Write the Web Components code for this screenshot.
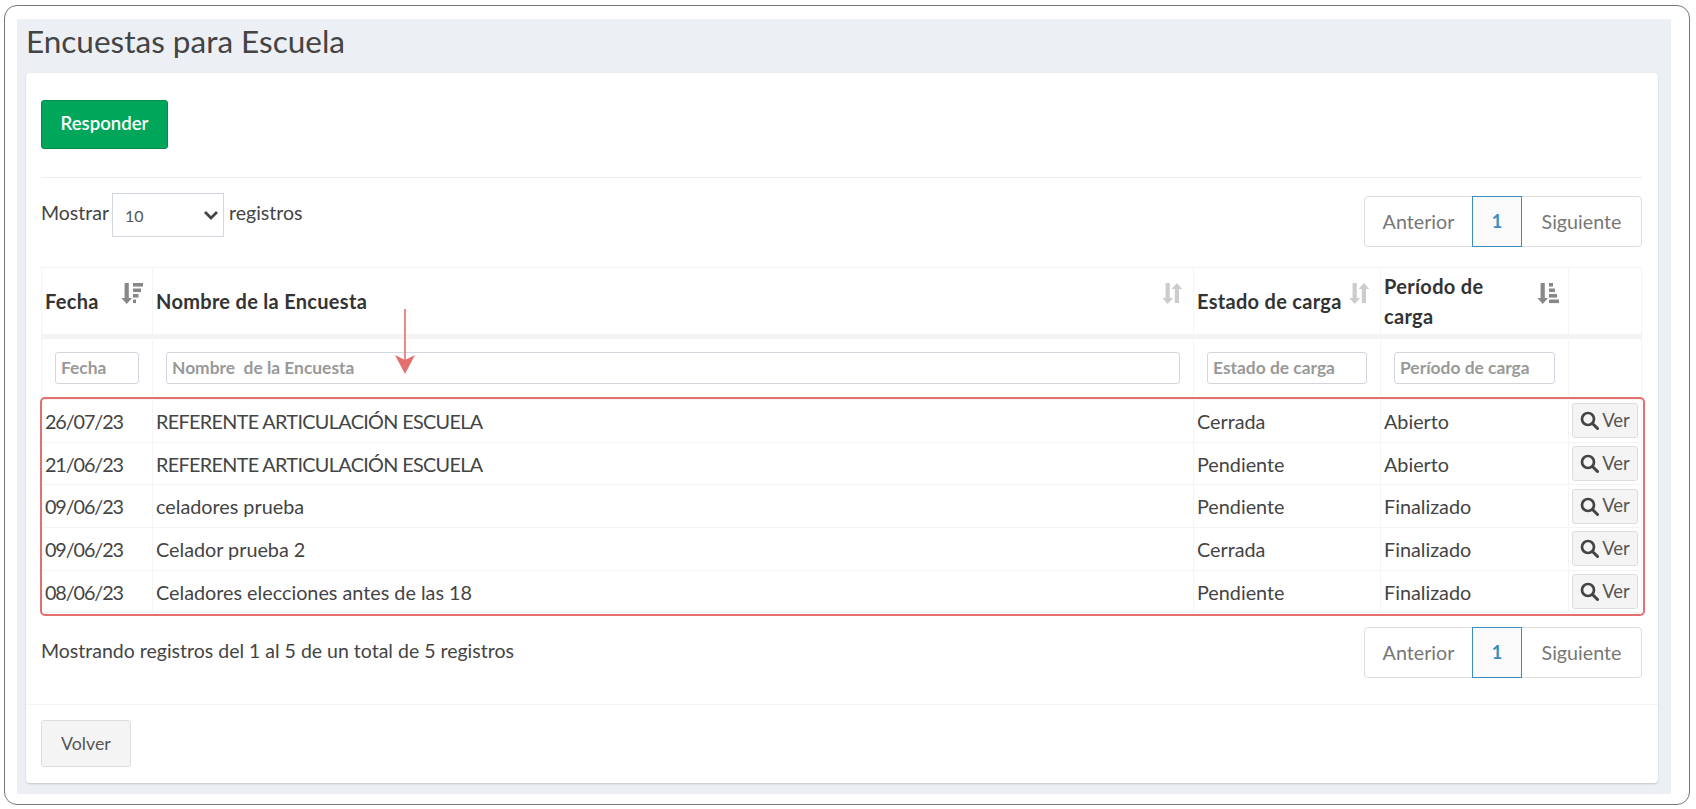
<!DOCTYPE html>
<html lang="es">
<head>
<meta charset="utf-8">
<title>Encuestas para Escuela</title>
<style>
    html, body { margin: 0; background: #fff; }
    body { font: 19.5px/1.5 Lato, "Noto Sans", sans-serif; color: #444; }
</style>
</head>
<body>
<survey-frame heading="Encuestas para Escuela">
    <survey-card>
        <app-button variant="success">Responder</app-button>
        <hr-line></hr-line>
        <length-row></length-row>
        <survey-table></survey-table>
        <info-row>Mostrando registros del 1 al 5 de un total de 5 registros</info-row>
        <app-button slot="footer">Volver</app-button>
    </survey-card>
</survey-frame>

<script>
'use strict';

(function() {
    const RED = '#e46f6f';

    class SurveyFrame extends HTMLElement {
        constructor() {
            super();
            const shadow = this.attachShadow({ mode: 'open' });
            shadow.innerHTML = `
                <style>
                    :host {
                        display: block;
                        box-sizing: border-box;
                        width: 1686px;
                        height: 800px;
                        margin: 5px 0 0 4px;
                        padding: 13px 18px 10px 12px;
                        border: 1px solid #777;
                        border-radius: 13px;
                    }
                    .panel {
                        height: 100%;
                        box-sizing: border-box;
                        padding: 0 13px 10px 9px;
                        background: #ecf0f5;
                    }
                    h1 {
                        margin: 0;
                        height: 54px;
                        font-size: 31.5px;
                        font-weight: 400;
                        line-height: 45px;
                        color: #444;
                    }
                </style>
                <div class="panel">
                    <h1>${this.getAttribute('heading')}</h1>
                    <slot></slot>
                </div>
            `;
        }
    }

    class SurveyCard extends HTMLElement {
        constructor() {
            super();
            const shadow = this.attachShadow({ mode: 'open' });
            shadow.innerHTML = `
                <style>
                    :host {
                        display: block;
                        height: 710px;
                        background: #fff;
                        border-radius: 4px;
                        box-shadow: 0 1px 2px rgba(0, 0, 0, .18);
                    }
                    .body { height: 631px; box-sizing: border-box; padding: 27px 16px 0 15px; }
                    .footer { padding: 15px 15px; border-top: 1px solid #f4f4f4; }
                </style>
                <div class="body"><slot></slot></div>
                <div class="footer"><slot name="footer"></slot></div>
            `;
        }
    }

    class AppButton extends HTMLElement {
        constructor() {
            super();
            const shadow = this.attachShadow({ mode: 'open' });
            shadow.innerHTML = `
                <style>
                    :host {
                        display: inline-flex;
                        align-items: center;
                        box-sizing: border-box;
                        height: 47px;
                        padding: 0 19px;
                        font-size: 17.8px;
                        color: #555;
                        background: #f4f4f4;
                        border: 1px solid #ddd;
                        border-radius: 3px;
                    }
                    :host([variant="success"]) {
                        height: 49px;
                        padding: 0 18.5px 2px;
                        font-size: 18.6px;
                        font-weight: 600;
                        color: #fff;
                        background: #00a65a;
                        border-color: #008d4c;
                    }
                </style>
                <slot></slot>
            `;
        }
    }

    class HrLine extends HTMLElement {
        constructor() {
            super();
            this.attachShadow({ mode: 'open' }).innerHTML = `
                <style>
                    :host { display: block; height: 1px; margin-top: 28px; background: #eee; }
                </style>
            `;
        }
    }

    class PageNav extends HTMLElement {
        constructor() {
            super();
            const shadow = this.attachShadow({ mode: 'open' });
            shadow.innerHTML = `
                <style>
                    :host {
                        display: flex;
                        box-sizing: border-box;
                        width: 278px;
                        height: 51px;
                        font-size: 19.7px;
                        color: #777;
                        border: 1px solid #ddd;
                        border-radius: 4px;
                    }
                    span { display: flex; align-items: center; justify-content: center; }
                    .prev { width: 107px; }
                    .next { flex: 1; }
                    .current {
                        box-sizing: border-box;
                        width: 50px;
                        margin: -1px 0;
                        font-weight: 700;
                        font-size: 18px;
                        color: #3c8dbc;
                        background: #fafafa;
                        border: 1px solid #3c8dbc;
                    }
                </style>
                <span class="prev">Anterior</span>
                <span class="current">1</span>
                <span class="next">Siguiente</span>
            `;
        }
    }

    class LengthRow extends HTMLElement {
        constructor() {
            super();
            const shadow = this.attachShadow({ mode: 'open' });
            shadow.innerHTML = `
                <style>
                    :host {
                        display: flex;
                        justify-content: space-between;
                        align-items: flex-start;
                        height: 89px;
                        padding-top: 15px;
                        box-sizing: border-box;
                    }
                    .length { display: flex; align-items: center; gap: 3px; }
                    .box { display: grid; width: 112px; height: 44px; margin-right: 2px; }
                    .box > * { grid-area: 1 / 1; }
                    select {
                        appearance: none;
                        width: 100%;
                        height: 100%;
                        padding: 2px 12px;
                        font: 16px Lato, sans-serif;
                        color: #555;
                        background: #fff;
                        border: 1px solid #d2d6de;
                        border-radius: 0;
                    }
                    svg { justify-self: end; align-self: center; margin-right: 5px; pointer-events: none; }
                    label { margin-top: -4px; }
                    page-nav { margin-top: 3px; }
                </style>
                <div class="length">
                    <label>Mostrar</label>
                    <div class="box">
                        <select><option>10</option><option>25</option><option>50</option></select>
                        <svg width="16" height="10" viewBox="0 0 16 10"><path d="M2 2l6 6 6-6" fill="none" stroke="#444" stroke-width="2.8"/></svg>
                    </div>
                    <label>registros</label>
                </div>
                <page-nav></page-nav>
            `;
        }
    }

    class InfoRow extends HTMLElement {
        constructor() {
            super();
            const shadow = this.attachShadow({ mode: 'open' });
            shadow.innerHTML = `
                <style>
                    :host {
                        display: flex;
                        justify-content: space-between;
                        align-items: center;
                        margin-top: 13px;
                    }
                    .text { margin-top: -3px; }
                </style>
                <span class="text"><slot></slot></span>
                <page-nav></page-nav>
            `;
        }
    }

    class SortIcon extends HTMLElement {
        constructor() {
            super();
            const kind = this.getAttribute('kind');
            const arrowDown = '<path d="M3.6 1h4.2v15h3.2L5.7 22 .4 16h3.2z"/>';
            const arrowUp = '<path d="M12.8 21h4.2V7h3.2L14.9 1 9.6 7h3.2z"/>';
            const bars = {
                desc: '<rect x="12" y="1" width="10" height="3.6"/><rect x="12" y="6.5" width="8" height="3.6"/><rect x="12" y="12" width="5.5" height="3.6"/><rect x="12" y="17.5" width="3" height="3.6"/>',
                asc: '<rect x="12" y="1" width="4" height="3.6"/><rect x="12" y="6.5" width="6" height="3.6"/><rect x="12" y="12" width="8" height="3.6"/><rect x="12" y="17.5" width="10" height="3.6"/>',
                both: arrowUp
            };
            this.attachShadow({ mode: 'open' }).innerHTML = `
                <style>
                    :host { display: block; flex: none; width: 22px; height: 22px; margin-top: 14px; color: ${kind === 'both' ? '#ccc' : '#888'}; }
                    svg { display: block; fill: currentColor; }
                </style>
                <svg width="22" height="22" viewBox="0 0 22 22">${arrowDown}${bars[kind]}</svg>
            `;
        }
    }

    class SurveyTable extends HTMLElement {
        get columns() {
            return [
                { label: 'Fecha', filter: 'Fecha', sort: 'desc' },
                { label: 'Nombre de la Encuesta', filter: 'Nombre  de la Encuesta', sort: 'both' },
                { label: 'Estado de carga', filter: 'Estado de carga', sort: 'both' },
                { label: 'Período de\ncarga', filter: 'Período de carga', sort: 'asc' }
            ];
        }

        get rows() {
            return [
                ['26/07/23', 'REFERENTE ARTICULACIÓN ESCUELA', 'Cerrada', 'Abierto'],
                ['21/06/23', 'REFERENTE ARTICULACIÓN ESCUELA', 'Pendiente', 'Abierto'],
                ['09/06/23', 'celadores prueba', 'Pendiente', 'Finalizado'],
                ['09/06/23', 'Celador prueba 2', 'Cerrada', 'Finalizado'],
                ['08/06/23', 'Celadores elecciones antes de las 18', 'Pendiente', 'Finalizado']
            ];
        }

        constructor() {
            super();
            const shadow = this.attachShadow({ mode: 'open' });
            const head = this.columns.map(a => `
                <th><div class="th"><span>${a.label}</span><sort-icon kind="${a.sort}"></sort-icon></div></th>
            `).join('');
            const filters = this.columns.map(a => `
                <td class="filter"><input placeholder="${a.filter}"></td>
            `).join('');
            const cell = (text, i) => {
                const caps = text === text.toUpperCase() && i === 1;
                return `<td class="${i === 0 ? 'date' : ''}${caps ? 'caps' : ''}">${text}</td>`;
            };
            const body = this.rows.map(a => `
                <tr>
                    ${a.map(cell).join('')}
                    <td class="action"><view-button></view-button></td>
                </tr>
            `).join('');
            shadow.innerHTML = `
                <style>
                    :host { display: block; position: relative; height: 347px; }
                    table { width: 1600px; table-layout: fixed; border-collapse: collapse; }
                    th, td { padding: 2px 3px 0; border: 1px solid #f4f4f4; }
                    th { height: 66px; padding: 0; text-align: left; font-size: 20px; letter-spacing: .3px; font-weight: 700; color: #333; border-bottom: 5px solid #f4f4f4; }
                    .th { display: flex; justify-content: space-between; height: 66px; padding: 0 9px 0 3px; box-sizing: border-box; }
                    .th span { align-self: center; white-space: pre-line; line-height: 30px; }
                    td { height: 42.7px; box-sizing: border-box; font-size: 19.8px; }
                    td.date { letter-spacing: -1.1px; }
                    td.caps { letter-spacing: -.65px; }
                    td.filter { height: 63px; padding: 0 13px 3px; }
                    td.action { padding: 0 3px; }
                    input {
                        display: block;
                        box-sizing: border-box;
                        width: 100%;
                        height: 32px;
                        padding: 0 5px;
                        font: 700 17.4px Lato, sans-serif;
                        background: #fff;
                        border: 1px solid #d2d6de;
                        border-radius: 3px;
                    }
                    input::placeholder { color: #999; opacity: 1; }
                    .mark {
                        position: absolute;
                        left: -1px;
                        top: 130px;
                        width: 1605px;
                        height: 219px;
                        box-sizing: border-box;
                        border: 2px solid ${RED};
                        border-radius: 5px;
                        pointer-events: none;
                    }
                    .arrow { position: absolute; left: 353px; top: 42px; pointer-events: none; }
                </style>
                <table>
                    <colgroup><col style="width:111px"><col style="width:1041px"><col style="width:187px"><col style="width:188px"><col style="width:73px"></colgroup>
                    <thead>
                        <tr>${head}<th></th></tr>
                        <tr>${filters}<td></td></tr>
                    </thead>
                    <tbody>${body}</tbody>
                </table>
                <div class="mark"></div>
                <svg class="arrow" width="22" height="66" viewBox="0 0 22 66"><path d="M11 0v62" stroke="${RED}" stroke-width="1.6"/><path d="M1 46l10 5 10-5-10 19z" fill="${RED}"/></svg>
            `;
        }
    }

    class ViewButton extends HTMLElement {
        constructor() {
            super();
            this.attachShadow({ mode: 'open' }).innerHTML = `
                <style>
                    :host {
                        display: flex;
                        align-items: center;
                        justify-content: center;
                        gap: 3px;
                        box-sizing: border-box;
                        width: 66px;
                        height: 35px;
                        font-size: 18.5px;
                        color: #555;
                        background: #f4f4f4;
                        border: 1px solid #ddd;
                        border-radius: 3px;
                    }
                    svg { display: block; flex: none; }
                </style>
                <svg width="19" height="19" viewBox="0 0 19 19"><circle cx="8" cy="8" r="6" fill="none" stroke="#444" stroke-width="2.7"/><path d="M12.5 12.5l5 5" stroke="#444" stroke-width="3" stroke-linecap="round"/></svg>
                <span>Ver</span>
            `;
        }
    }

    customElements.define('sort-icon', SortIcon);
    customElements.define('view-button', ViewButton);
    customElements.define('page-nav', PageNav);
    customElements.define('hr-line', HrLine);
    customElements.define('app-button', AppButton);
    customElements.define('length-row', LengthRow);
    customElements.define('info-row', InfoRow);
    customElements.define('survey-table', SurveyTable);
    customElements.define('survey-card', SurveyCard);
    customElements.define('survey-frame', SurveyFrame);
})();
</script>
</body>
</html>
